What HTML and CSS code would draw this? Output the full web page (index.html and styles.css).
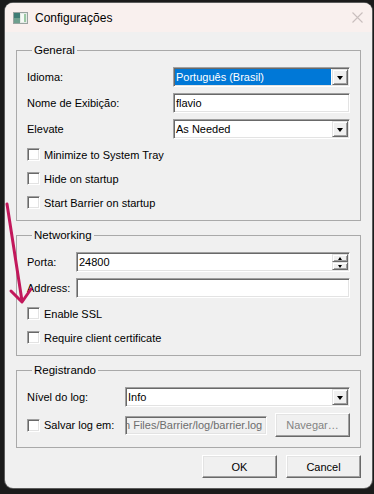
FILE: index.html
```html
<!DOCTYPE html>
<html lang="pt-BR">
<head>
<meta charset="utf-8">
<title>Configurações</title>
<link rel="stylesheet" href="styles.css">
</head>
<body>
<div class="window">
  <div class="titlebar">
    <svg class="app-icon" width="15" height="12" viewBox="0 0 15 12">
      <rect x="0.5" y="0.5" width="14" height="11" fill="#e4ebe6" stroke="#9aa3a0"/>
      <rect x="1" y="1" width="6" height="10" fill="#3f7c74"/>
      <rect x="1" y="6" width="6" height="5" fill="#6f9f8e"/>
      <rect x="8" y="2" width="5" height="8" fill="#f6faf6"/>
      <rect x="11" y="2" width="2" height="8" fill="#9cc8a4"/>
    </svg>
    <span class="title">Configurações</span>
    <svg class="close" width="11" height="11" viewBox="0 0 11 11">
      <path d="M0.5 0.5 L10.5 10.5 M10.5 0.5 L0.5 10.5" stroke="#c9bfbe" stroke-width="1.1" fill="none"/>
    </svg>
  </div>
  <div class="content">
    <section class="group">
      <div class="group-title">General</div>
      <div class="form form-general">
        <span class="label">Idioma:</span>
        <div class="field combo"><span class="value selected">Português (Brasil)</span><span class="drop-btn"><span class="tri"></span></span></div>
        <span class="label">Nome de Exibição:</span>
        <div class="field text"><span class="value">flavio</span></div>
        <span class="label">Elevate</span>
        <div class="field combo"><span class="value">As Needed</span><span class="drop-btn"><span class="tri"></span></span></div>
      </div>
      <div class="checks">
        <div class="check"><span class="box"></span><span>Minimize to System Tray</span></div>
        <div class="check"><span class="box"></span><span>Hide on startup</span></div>
        <div class="check"><span class="box"></span><span>Start Barrier on startup</span></div>
      </div>
    </section>

    <section class="group">
      <div class="group-title">Networking</div>
      <div class="form form-net">
        <span class="label">Porta:</span>
        <div class="field spin"><span class="value">24800</span><span class="spin-btns"><span class="spin-btn"><span class="tri-s up"></span></span><span class="spin-btn"><span class="tri-s"></span></span></span></div>
        <span class="label">Address:</span>
        <div class="field text"><span class="value"></span></div>
      </div>
      <div class="checks">
        <div class="check"><span class="box"></span><span>Enable SSL</span></div>
        <div class="check"><span class="box"></span><span>Require client certificate</span></div>
      </div>
    </section>

    <section class="group">
      <div class="group-title">Registrando</div>
      <div class="form form-log">
        <span class="label">Nível do log:</span>
        <div class="field combo"><span class="value">Info</span><span class="drop-btn"><span class="tri"></span></span></div>
        <div class="check"><span class="box"></span><span>Salvar log em:</span></div>
        <div class="log-row">
          <div class="field text disabled"><span class="value path"><span class="path-text">n Files/Barrier/log/barrier.log</span></span></div>
          <button class="btn disabled-btn">Navegar…</button>
        </div>
      </div>
    </section>

    <div class="actions">
      <button class="btn">OK</button>
      <button class="btn">Cancel</button>
    </div>
  </div>
</div>

<svg class="annotation" width="40" height="110" viewBox="0 0 40 110">
  <path d="M7 3 L22 100" stroke="#c2185b" stroke-width="3" fill="none" stroke-linecap="round"/>
  <path d="M11 90 L22 101 L31 88" stroke="#c2185b" stroke-width="3" fill="none" stroke-linecap="round" stroke-linejoin="round"/>
</svg>
</body>
</html>
```

FILE: styles.css
```css
html, body {
  margin: 0;
  padding: 0;
}
body {
  background: #1b1b1b;
  width: 374px;
  height: 494px;
  overflow: hidden;
  position: relative;
  font-family: "Liberation Sans", Arial, sans-serif;
  font-size: 11px;
  color: #000;
}
.window {
  margin: 3px 0 0 5px;
  width: 367px;
  height: 485px;
  background: #f0f0f0;
  border-radius: 8px;
  box-shadow: 0 0 0 1px #5c5c5c;
  overflow: hidden;
  display: flex;
  flex-direction: column;
}
.titlebar {
  height: 29px;
  background: #f9f0ee;
  display: flex;
  align-items: center;
  padding-left: 8px;
  flex: none;
}
.app-icon {
  flex: none;
}
.title {
  margin-left: 7px;
  font-size: 12px;
  color: #000;
}
.close {
  margin-left: auto;
  margin-right: 9px;
}
.content {
  padding: 18px 11px 10px;
  display: flex;
  flex-direction: column;
}
.group {
  border: 1px solid #a9a9a9;
  padding: 0 10px 11px;
  margin-bottom: 14px;
}
.group:nth-of-type(3) {
  padding-bottom: 10px;
  margin-bottom: 7px;
}
.group-title {
  width: fit-content;
  margin: -7px 0 0 5px;
  padding: 0 2px;
  height: 13px;
  line-height: 13px;
  background: #f0f0f0;
  font-size: 11.5px;
}
.form {
  display: grid;
  row-gap: 6px;
  margin-top: 10px;
  align-items: center;
}
.form-general { grid-template-columns: 146px 1fr; }
.form-net { grid-template-columns: 49px 1fr; }
.form-log { grid-template-columns: 98px 1fr; }
.label {
  white-space: nowrap;
}
.field {
  height: 20px;
  box-sizing: border-box;
  background: #fff;
  border: 1px solid;
  border-color: #a0a0a0 #ffffff #ffffff #a0a0a0;
  box-shadow: inset 1px 1px 0 #696969, inset -1px -1px 0 #e3e3e3;
  padding: 1px;
  display: flex;
  align-items: stretch;
}
.value {
  flex: 1;
  min-width: 0;
  display: flex;
  align-items: center;
  padding-left: 1px;
  white-space: nowrap;
  overflow: hidden;
}
.value.selected {
  background: #0078d7;
  color: #fff;
  margin-right: 1px;
}
.drop-btn, .spin-btn {
  width: 16px;
  box-sizing: border-box;
  background: #f0f0f0;
  border: 1px solid;
  border-color: #e3e3e3 #696969 #696969 #e3e3e3;
  box-shadow: inset 1px 1px 0 #fff, inset -1px -1px 0 #a0a0a0;
  display: flex;
  align-items: center;
  justify-content: center;
}
.tri {
  width: 0;
  height: 0;
  border-left: 3.5px solid transparent;
  border-right: 3.5px solid transparent;
  border-top: 4px solid #000;
  margin-top: 1px;
}
.spin-btns {
  display: flex;
  flex-direction: column;
  width: 16px;
}
.spin-btn {
  height: 8px;
}
.tri-s {
  width: 0;
  height: 0;
  border-left: 2.5px solid transparent;
  border-right: 2.5px solid transparent;
  border-top: 3px solid #000;
}
.tri-s.up {
  border-top: none;
  border-bottom: 3px solid #000;
}
.checks {
  display: flex;
  flex-direction: column;
  gap: 11px;
  margin-top: 9px;
}
.check {
  display: flex;
  align-items: center;
  gap: 4px;
  height: 13px;
  white-space: nowrap;
}
.box {
  width: 13px;
  height: 13px;
  box-sizing: border-box;
  background: #fff;
  border: 1px solid;
  border-color: #a0a0a0 #fff #fff #a0a0a0;
  box-shadow: inset 1px 1px 0 #696969, inset -1px -1px 0 #e3e3e3;
  flex: none;
}
.log-row {
  display: flex;
  gap: 8px;
  align-items: center;
  height: 24px;
}
.log-row .field {
  width: 142px;
  height: 19px;
}
.field.disabled {
  background: #f0f0f0;
  color: #6d6d6d;
}
.value.path {
  padding-left: 0;
}
.path-text {
  margin-left: -3px;
}
.btn {
  font: inherit;
  color: #000;
  width: 75px;
  height: 23px;
  background: #f0f0f0;
  border: 1px solid;
  border-color: #fff #696969 #696969 #fff;
  box-shadow: inset -1px -1px 0 #a0a0a0, inset 1px 1px 0 #e3e3e3;
  padding: 0;
  margin: 0;
}
.log-row .btn {
  height: 24px;
}
.disabled-btn {
  color: #838383;
}
.actions {
  display: flex;
  justify-content: flex-end;
  gap: 9px;
}
.annotation {
  position: absolute;
  left: 0;
  top: 201px;
}
```
